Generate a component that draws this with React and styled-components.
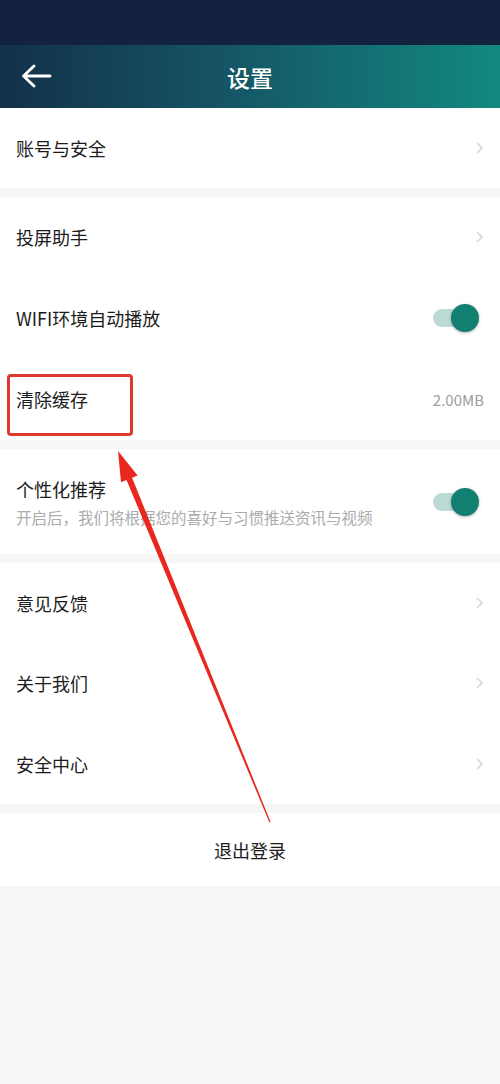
import React from "react";
import styled, { createGlobalStyle } from "styled-components";

const Global = createGlobalStyle`
  html, body {
    margin: 0;
    padding: 0;
    background: #f6f6f6;
    font-family: "Noto Sans CJK SC", "Noto Sans", sans-serif;
  }
`;

const Page = styled.div`
  position: relative;
  width: 500px;
  min-height: 1084px;
  background: #f6f6f6;
`;

const StatusBar = styled.div`
  height: 45px;
  background: #13233f;
`;

const Header = styled.div`
  height: 63px;
  display: flex;
  align-items: center;
  justify-content: center;
  position: relative;
  background: linear-gradient(90deg, #13304a 0%, #155565 45%, #12897f 100%);
  color: #fff;
  font-size: 23px;
  font-weight: 500;
`;

const Back = styled.div`
  position: absolute;
  left: 20px;
  top: 18px;
  display: flex;
`;

const Group = styled.div`
  background: #fff;
  margin-bottom: 9px;
`;

const Row = styled.div`
  height: ${(p) => p.h || 80}px;
  display: flex;
  align-items: center;
  justify-content: space-between;
  padding: 0 16px 0 16px;
  box-sizing: border-box;
`;

const TextCol = styled.div`
  display: flex;
  flex-direction: column;
  gap: 4px;
`;

const Label = styled.div`
  font-size: 18px;
  color: #1c1c1c;
  line-height: 26px;
`;

const Sub = styled.div`
  font-size: 15.5px;
  color: #ababab;
  line-height: 22px;
`;

const Value = styled.div`
  font-size: 15px;
  color: #9c9c9c;
`;

const Toggle = styled.div`
  position: relative;
  width: 46px;
  height: 30px;
  margin-right: 5px;
  &::before {
    content: "";
    position: absolute;
    left: 0;
    top: 6px;
    width: 36px;
    height: 18px;
    border-radius: 9px;
    background: #bcdad4;
  }
  &::after {
    content: "";
    position: absolute;
    right: 0;
    top: 1px;
    width: 28px;
    height: 28px;
    border-radius: 50%;
    background: #137f70;
    box-shadow: 0 1px 3px rgba(0, 0, 0, 0.3);
  }
`;

const Logout = styled.div`
  height: 73px;
  background: #fff;
  display: flex;
  align-items: center;
  justify-content: center;
  font-size: 18px;
  color: #1c1c1c;
`;

const Highlight = styled.div`
  position: absolute;
  left: 7px;
  top: 374px;
  width: 126px;
  height: 62px;
  box-sizing: border-box;
  border: 3px solid #e03a30;
  border-radius: 4px;
`;

const ArrowLayer = styled.svg`
  position: absolute;
  left: 0;
  top: 0;
  pointer-events: none;
`;

const Chevron = () => (
  <svg width="10" height="14" viewBox="0 0 10 14">
    <path d="M3 2 L8 7 L3 12" fill="none" stroke="#dedede" strokeWidth="2" />
  </svg>
);

const BackArrow = () => (
  <svg width="32" height="26" viewBox="0 0 32 26">
    <path
      d="M30 13 H4 M14 3 L3.5 13 L14 23"
      fill="none"
      stroke="#fff"
      strokeWidth="2.8"
      strokeLinecap="round"
      strokeLinejoin="round"
    />
  </svg>
);

export default function App() {
  return (
    <Page>
      <Global />
      <StatusBar />
      <Header>
        <Back>
          <BackArrow />
        </Back>
        设置
      </Header>
      <Group>
        <Row>
          <Label>账号与安全</Label>
          <Chevron />
        </Row>
      </Group>
      <Group>
        <Row>
          <Label>投屏助手</Label>
          <Chevron />
        </Row>
        <Row h={81}>
          <Label>WIFI环境自动播放</Label>
          <Toggle />
        </Row>
        <Row h={82}>
          <Label>清除缓存</Label>
          <Value>2.00MB</Value>
        </Row>
      </Group>
      <Group>
        <Row h={105}>
          <TextCol>
            <Label>个性化推荐</Label>
            <Sub>开启后，我们将根据您的喜好与习惯推送资讯与视频</Sub>
          </TextCol>
          <Toggle />
        </Row>
      </Group>
      <Group>
        <Row>
          <Label>意见反馈</Label>
          <Chevron />
        </Row>
        <Row>
          <Label>关于我们</Label>
          <Chevron />
        </Row>
        <Row h={81}>
          <Label>安全中心</Label>
          <Chevron />
        </Row>
      </Group>
      <Logout>退出登录</Logout>
      <Highlight />
      <ArrowLayer width="500" height="1084">
        <polygon
          points="118,451 137.6,475.4 132.1,477.7 270.6,822 269.4,822.4 126.5,479.9 121,482.2"
          fill="#e8281e"
        />
      </ArrowLayer>
    </Page>
  );
}
